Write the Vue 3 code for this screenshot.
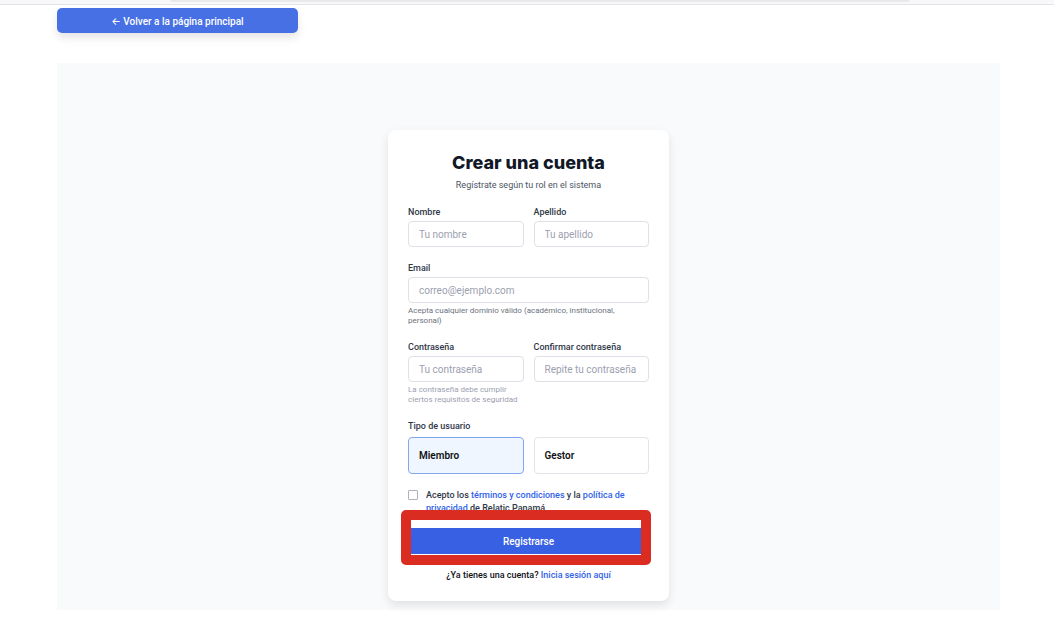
<script setup>
import { ref } from 'vue'

const role = ref('miembro')
const accepted = ref(false)
</script>

<template>
  <div class="page">
    <div class="chrome"><div class="address"></div></div>
    <main class="content">
      <button type="button" class="back"><span class="arrow">←</span> Volver a la página principal</button>
      <section class="panel">
        <form class="card" @submit.prevent>
          <h1>Crear una cuenta</h1>
          <p class="subtitle">Regístrate según tu rol en el sistema</p>

          <div class="row">
            <div class="field">
              <label for="nombre">Nombre</label>
              <input id="nombre" type="text" placeholder="Tu nombre" />
            </div>
            <div class="field">
              <label for="apellido">Apellido</label>
              <input id="apellido" type="text" placeholder="Tu apellido" />
            </div>
          </div>

          <div class="row single">
            <div class="field">
              <label for="email">Email</label>
              <input id="email" type="email" placeholder="correo@ejemplo.com" />
              <p class="hint">Acepta cualquier dominio válido (académico, institucional, personal)</p>
            </div>
          </div>

          <div class="row">
            <div class="field">
              <label for="clave">Contraseña</label>
              <input id="clave" type="password" placeholder="Tu contraseña" />
              <p class="hint light">La contraseña debe cumplir ciertos requisitos de seguridad</p>
            </div>
            <div class="field">
              <label for="clave2">Confirmar contraseña</label>
              <input id="clave2" type="password" placeholder="Repite tu contraseña" />
            </div>
          </div>

          <fieldset>
            <legend>Tipo de usuario</legend>
            <div class="roles">
              <label class="role" :class="{ selected: role === 'miembro' }">
                <input v-model="role" type="radio" name="rol" value="miembro" />Miembro
              </label>
              <label class="role" :class="{ selected: role === 'gestor' }">
                <input v-model="role" type="radio" name="rol" value="gestor" />Gestor
              </label>
            </div>
          </fieldset>

          <div class="terms">
            <input id="terminos" v-model="accepted" type="checkbox" />
            <label for="terminos">Acepto los <a href="#terminos">términos y condiciones</a> y la <a href="#privacidad">política de privacidad</a> de Relatic Panamá</label>
          </div>

          <div class="action">
            <button type="submit" class="submit">Registrarse</button>
            <div class="highlight"></div>
          </div>

          <p class="login">¿Ya tienes una cuenta? <a href="#login">Inicia sesión aquí</a></p>
        </form>
      </section>
    </main>
  </div>
</template>

<style>
body {
  background: #fff;
}
</style>

<style scoped>
.page {
  font-family: Roboto, "Liberation Sans", sans-serif;
  color: #0f1117;
}
.page * {
  box-sizing: border-box;
}
.chrome {
  height: 5px;
  padding: 0 144px 0 170px;
  background: #f8f8fa;
  border-bottom: 1px solid #e4e4e7;
}
.address {
  height: 2px;
  background: #e9e9eb;
  border-radius: 0 0 3px 3px;
}
.content {
  padding: 3px 54px 30px 57px;
}
button {
  display: block;
  border: 0;
  padding: 2px 0 0;
  color: #fff;
  font-family: inherit;
  font-size: 10px;
  font-weight: 500;
  line-height: 14px;
  cursor: pointer;
}
.arrow {
  font-family: Inter, sans-serif;
}
.back {
  width: 241px;
  height: 25px;
  background: #4770e4;
  border-radius: 5px;
  box-shadow: 0 5px 9px rgba(0, 0, 0, 0.1);
}
.panel {
  margin-top: 30px;
  padding: 67px 0 9px;
  background: #f9fafc;
}
.card {
  width: 281px;
  margin: 0 auto;
  padding: 20px;
  background: #fff;
  border-radius: 8px;
  box-shadow: 0 4px 10px rgba(0, 0, 0, 0.1);
}
h1 {
  margin: 0;
  padding-top: 1px;
  font-family: Inter, "Liberation Sans", sans-serif;
  font-size: 18px;
  font-weight: 800;
  line-height: 24px;
  text-align: center;
  color: #111827;
}
.subtitle {
  margin: 3px 0 14px;
  font-size: 9px;
  line-height: 14px;
  text-align: center;
  color: #4b5563;
}
.row {
  display: grid;
  grid-template-columns: 1fr 1fr;
  gap: 10px;
  margin-bottom: 15px;
}
.row.single {
  grid-template-columns: 1fr;
}
.field {
  min-width: 0;
}
.field label,
legend {
  display: block;
  padding: 0;
  margin-bottom: 3px;
  font-size: 9px;
  font-weight: 500;
  line-height: 12px;
  color: #303848;
}
.field input {
  display: block;
  width: 100%;
  height: 26px;
  padding: 0 10px;
  border: 1px solid #dfe1e8;
  border-radius: 4px;
  background: #fff;
  font-family: inherit;
  font-size: 10px;
}
.field input::placeholder {
  color: #9ca0af;
  opacity: 1;
}
.hint {
  margin: 3px 0 0;
  font-size: 8px;
  line-height: 10px;
  color: #6b7280;
}
.light {
  color: #9ca0af;
}
fieldset {
  margin: 0;
  padding: 0;
  border: 0;
}
.roles {
  display: grid;
  grid-template-columns: 1fr 1fr;
  gap: 10px;
  padding-top: 2px;
}
.role {
  height: 37px;
  padding: 0 10px;
  border: 1px solid #e2e4ea;
  border-radius: 4px;
  font-size: 10px;
  font-weight: 600;
  line-height: 35px;
  color: #101114;
}
.role.selected {
  background: #eff6ff;
  border-color: #82a7ef;
}
.role input {
  position: absolute;
  opacity: 0;
  appearance: none;
  margin: 0;
}
.terms {
  display: flex;
  gap: 8px;
  margin-top: 15px;
  font-size: 9px;
  font-weight: 500;
  line-height: 13px;
  color: #303848;
}
.terms input {
  flex: none;
  appearance: none;
  width: 10px;
  height: 10px;
  margin: 1px 0 0;
  border: 1px solid #aeb2bf;
  border-radius: 1px;
  background: #fff;
}
.terms input:checked {
  background: #2f62e8;
}
a {
  color: #2f62e8;
  text-decoration: none;
}
.action {
  position: relative;
  margin-top: 13px;
}
.submit {
  width: 100%;
  height: 26px;
  background: #3860e2;
  border-radius: 4px;
}
.highlight {
  position: absolute;
  inset: -18px -2px -11px -7px;
  border: 10px solid #da2c20;
  border-radius: 5px;
  pointer-events: none;
}
.login {
  margin: 15px 0 0;
  font-size: 9px;
  font-weight: 500;
  line-height: 12px;
  text-align: center;
}
</style>
